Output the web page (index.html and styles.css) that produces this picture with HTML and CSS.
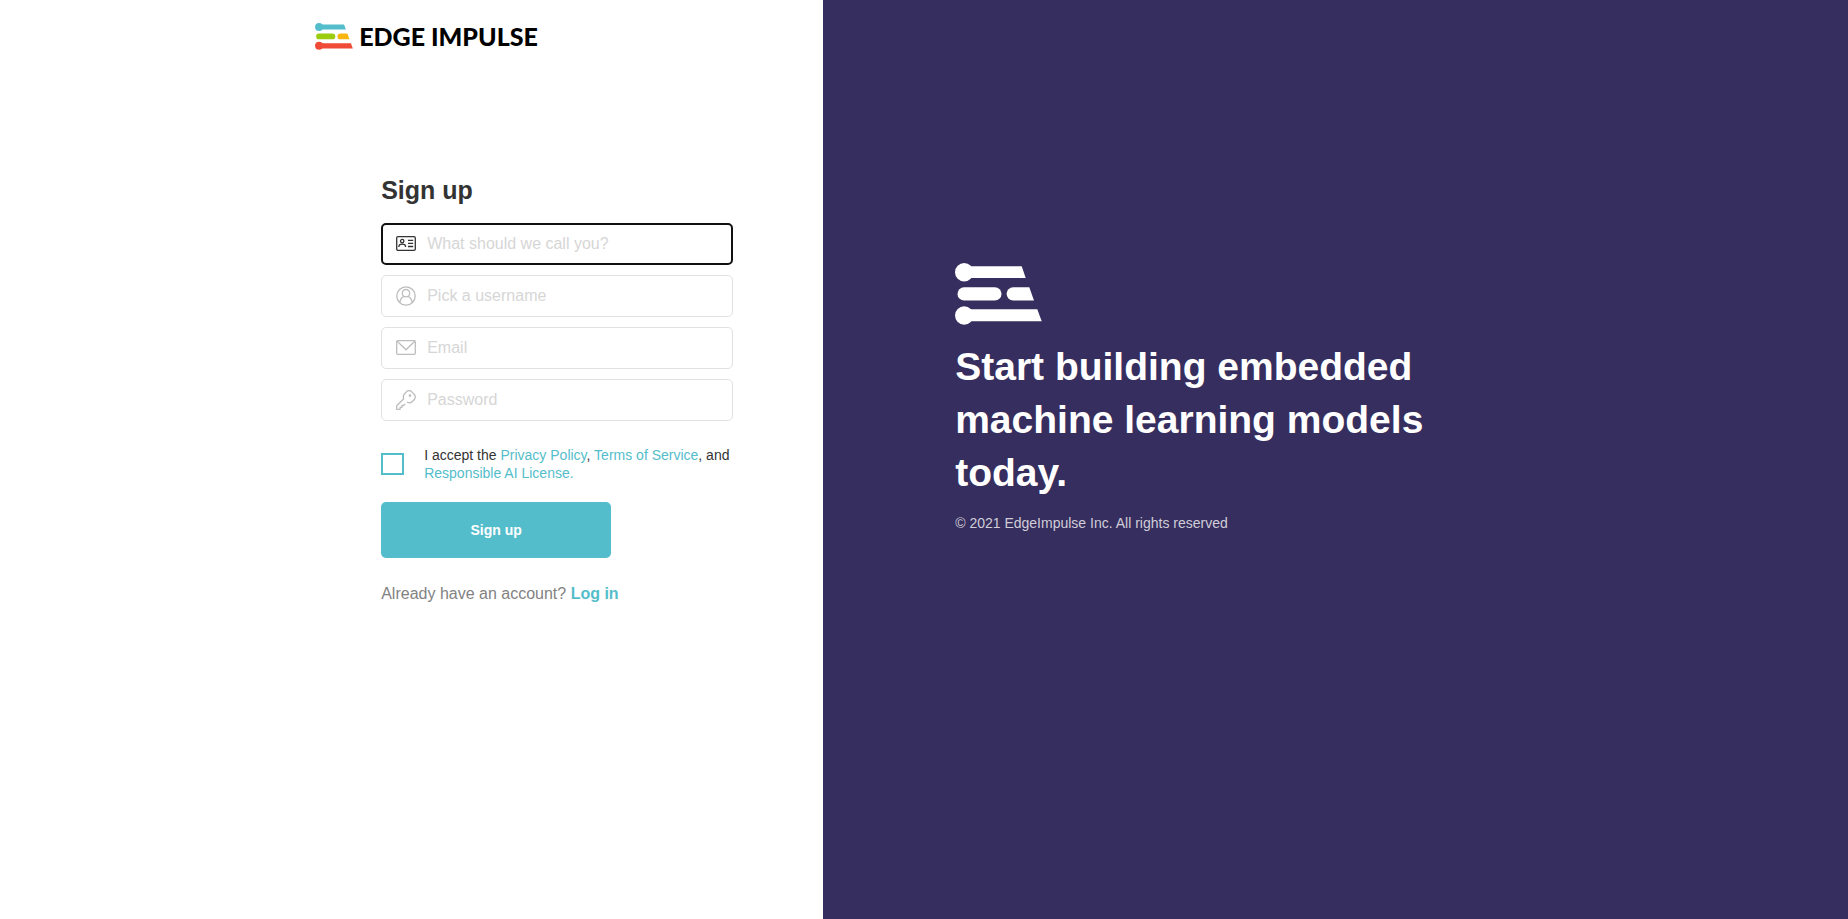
FILE: index.html
```
<!DOCTYPE html>
<html lang="en">
<head>
    <meta charset="UTF-8">
    <meta name="viewport" content="width=device-width, initial-scale=1.0">
    <title>Sign up - Edge Impulse</title>
    <link rel="stylesheet" href="styles.css">
</head>
<body>
    <div class="page">
        <main class="signup">
            <div class="signup-inner">
                <a class="brand" href="#">
                    <svg class="brand-mark" viewBox="0 0 87 62" aria-hidden="true">
                        <g fill="#54bdcb">
                            <circle cx="9.2" cy="9.2" r="9.2"/>
                            <path d="M9 3.2H66.7L70.7 15H9z"/>
                        </g>
                        <rect x="2.5" y="24.2" width="44" height="13.3" rx="6.6" fill="#9bcc0d"/>
                        <path d="M58.2 24.2H74.3L79 37.5H58.2a6.65 6.65 0 0 1 0-13.3z" fill="#f7b50d"/>
                        <g fill="#f04b36">
                            <circle cx="9.2" cy="52.5" r="9.2"/>
                            <path d="M9 46.3H82.3L86.7 58.3H9z"/>
                        </g>
                    </svg>
                    <span>EDGE IMPULSE</span>
                </a>

                <form class="signup-form">
                    <h1>Sign up</h1>
                    <label class="field active">
                        <svg class="field-icon" viewBox="0 0 20 20" aria-hidden="true">
                            <rect x="0.7" y="2.7" width="18.6" height="13.6" rx="1.3"/>
                            <circle cx="6.2" cy="7.1" r="1.7"/>
                            <path d="M2.8 12.9c0-1.8 1.2-2.8 3.4-2.8s3.4 1 3.4 2.8M12 6.3h5.2M12 9.4h5.2M12 12.5h5.2"/>
                        </svg>
                        <input type="text" name="name" placeholder="What should we call you?" aria-label="Name">
                    </label>
                    <label class="field">
                        <svg class="field-icon" viewBox="0 0 20 20" aria-hidden="true">
                            <circle cx="10" cy="10" r="9.2"/>
                            <circle cx="10" cy="7.2" r="3.7"/>
                            <path d="M3.8 16.7c.3-3.5 2-5.6 4.4-6.4M16.2 16.7c-.3-3.5-2-5.6-4.4-6.4"/>
                        </svg>
                        <input type="text" name="username" placeholder="Pick a username" aria-label="Username">
                    </label>
                    <label class="field">
                        <svg class="field-icon" viewBox="0 0 20 20" aria-hidden="true">
                            <rect x="0.7" y="2.7" width="18.6" height="13.6" rx="1"/>
                            <path d="M1.2 3.2L10 11.8l8.8-8.6"/>
                        </svg>
                        <input type="email" name="email" placeholder="Email" aria-label="Email">
                    </label>
                    <label class="field">
                        <svg class="field-icon" viewBox="0 0 20 20" aria-hidden="true">
                            <path d="M11 12.1c2 1 3.9.8 5.1-.3l2.2-2.3c1.2-1.5 1.2-3.3.2-4.8L15.600 1.600c-1.500-1.200-3.400-1.200-4.900 0L8.300 4c-1.100 1.300-1.300 2.900-.6 4.700L.7 15.700v3.600h3.400v-2h1.800v-1.800h1.700L9.300 14"/>
                            <circle cx="14" cy="5.600" r="0.700"/>
                        </svg>
                        <input type="password" name="password" placeholder="Password" aria-label="Password">
                    </label>

                    <div class="terms">
                        <input type="checkbox" id="accept" name="accept">
                        <label for="accept">I accept the <a href="#">Privacy Policy</a>, <a href="#">Terms of Service</a>, and <a href="#">Responsible AI License.</a></label>
                    </div>

                    <button class="submit" type="submit">Sign up</button>
                    <p class="login">Already have an account? <a href="#">Log in</a></p>
                </form>
            </div>
        </main>

        <aside class="promo">
            <svg class="promo-mark" viewBox="0 0 87 62" fill="#fff" aria-hidden="true">
                <circle cx="9.2" cy="9.2" r="9.2"/>
                <path d="M9 3.2H66.7L70.7 15H9z"/>
                <rect x="2.5" y="24.2" width="44" height="13.3" rx="6.6"/>
                <path d="M58.2 24.2H74.3L79 37.5H58.2a6.65 6.65 0 0 1 0-13.3z"/>
                <circle cx="9.2" cy="52.5" r="9.2"/>
                <path d="M9 46.3H82.3L86.7 58.3H9z"/>
            </svg>
            <h2>Start building embedded machine learning models today.</h2>
            <p>© 2021 EdgeImpulse Inc. All rights reserved</p>
        </aside>
    </div>
</body>
</html>
```
FILE: styles.css
```
* {
    box-sizing: border-box;
}

body {
    margin: 0;
    font-family: "Liberation Sans", Arial, sans-serif;
    font-size: 16px;
    color: #333;
    background-color: #fff;
}

a {
    color: #54bdcb;
    text-decoration: none;
}

.page {
    display: grid;
    grid-template-columns: 49fr 61fr;
    min-height: 100vh;
}

/* left side */
.signup-inner {
    max-width: 508px;
    margin-left: auto;
    padding-top: 22px;
}

.brand {
    display: flex;
    align-items: center;
    gap: 6px;
    height: 28px;
    font-family: Lato, sans-serif;
    font-size: 25px;
    font-weight: 900;
    line-height: 28px;
    color: #000;
}

.brand-mark {
    width: 38px;
    height: 27px;
}

.signup-form {
    padding: 125px 90px 40px 66px;
}

h1 {
    margin: 0 0 18px;
    font-size: 25px;
    line-height: 30px;
    color: #333;
}

.field {
    display: flex;
    align-items: center;
    height: 42px;
    margin-bottom: 10px;
    padding: 0 14px;
    border: 1px solid #e2e2e2;
    border-radius: 5px;
    color: #bdbdbd;
}

.field.active {
    padding: 0 13px;
    border: 2px solid #111;
    color: #333;
}

.field-icon {
    flex: none;
    width: 20px;
    height: 20px;
    margin-right: 11px;
    fill: none;
    stroke: currentColor;
    stroke-width: 1.3;
    stroke-linejoin: round;
}

.field input {
    flex: 1;
    min-width: 0;
    padding: 0;
    border: none;
    outline: none;
    background: none;
    font: inherit;
    color: #333;
}

.field input::placeholder {
    color: #d6d6d6;
}

.terms {
    display: flex;
    align-items: center;
    gap: 20px;
    margin: 25px 0 20px;
    font-size: 14px;
    line-height: 18px;
    color: #333;
}

.terms input {
    flex: none;
    appearance: none;
    width: 23px;
    height: 22px;
    margin: 0;
    border: 2px solid #54bdcb;
}

.terms input:checked {
    background-color: #54bdcb;
}

.submit {
    display: block;
    width: 230px;
    height: 56px;
    border: none;
    border-radius: 5px;
    background-color: #54bdcb;
    color: #fff;
    font: bold 14px "Liberation Sans", Arial, sans-serif;
    cursor: pointer;
}

.login {
    margin: 24px 0 0;
    line-height: 24px;
    color: #828282;
}

.login a {
    font-weight: bold;
}

/* right side */
.promo {
    padding: 263px 132px 40px;
    background-color: #362e5e;
    color: #fff;
}

.promo-mark {
    display: block;
    width: 87px;
    height: 62px;
}

.promo h2 {
    max-width: 500px;
    margin: 15px 0 14px;
    font-size: 39px;
    line-height: 53px;
}

.promo p {
    margin: 0;
    font-size: 14px;
    line-height: 20px;
    color: #d0cdd9;
}
```
